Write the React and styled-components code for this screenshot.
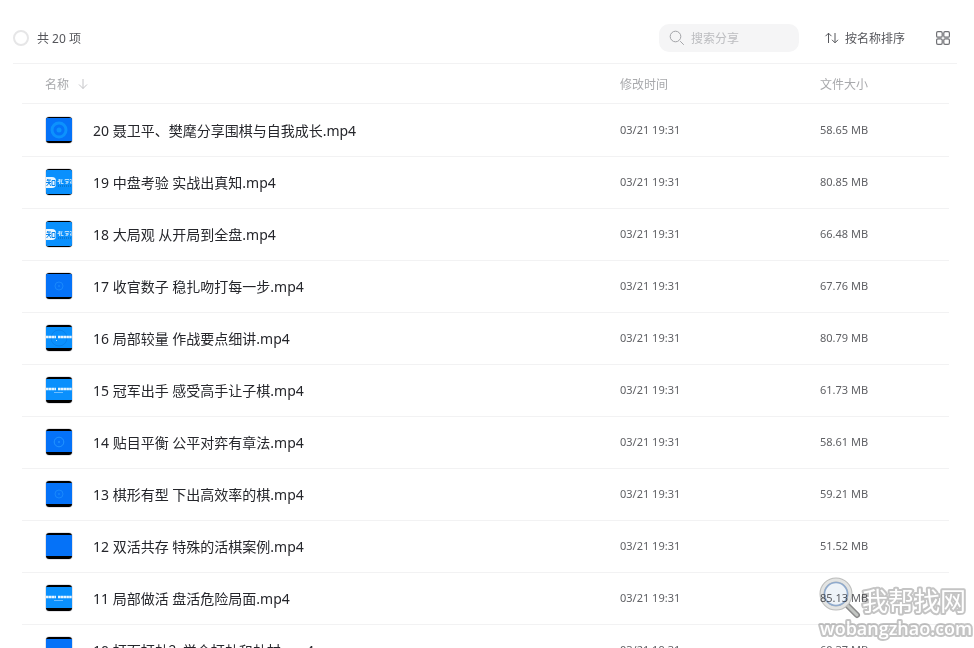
import React from "react";
import styled, { createGlobalStyle } from "styled-components";

const GlobalStyle = createGlobalStyle`
  * { box-sizing: border-box; }
  body {
    margin: 0;
    background: #fff;
    color: #25262b;
    font-family: "Noto Sans", "Noto Sans CJK SC", sans-serif;
    font-size: 14px;
  }
  button, input { font: inherit; color: inherit; }
`;

const Page = styled.main`
  height: 100vh;
  overflow: hidden;
  padding: 13px 17px 0 13px;
`;

const Toolbar = styled.header`
  display: flex;
  align-items: center;
  height: 51px;
  border-bottom: 1px solid #f2f2f3;
  font-size: 12px;
  color: #55565b;
`;

const SelectAll = styled.label`
  display: flex;
  align-items: center;
  gap: 8px;
  margin-right: auto;
`;

const RoundCheck = styled.input`
  appearance: none;
  width: 16px;
  height: 16px;
  margin: 0;
  border: 2px solid #e6e6e7;
  border-radius: 50%;
  background: #fff;
  &:checked { background: #637dff; }
`;

const Search = styled.label`
  display: flex;
  align-items: center;
  gap: 6px;
  width: 140px;
  height: 28px;
  padding: 0 10px;
  border-radius: 10px;
  background: #f5f5f6;
  color: #a3a4a8;
`;

const SearchInput = styled.input`
  flex: 1;
  min-width: 0;
  padding: 0;
  border: 0;
  outline: 0;
  background: none;
  color: #55565b;
  &::placeholder { color: #bcbdc0; opacity: 1; }
`;

const ToolButton = styled.button`
  display: flex;
  align-items: center;
  gap: 5px;
  margin-left: ${(p) => p.$gap}px;
  padding: 0;
  border: 0;
  background: none;
  cursor: pointer;
`;

const GridButton = styled(ToolButton)`
  margin-right: 6px;
`;

const Files = styled.table`
  width: calc(100% - 17px);
  margin: 0 8px 0 9px;
  border-collapse: separate;
  border-spacing: 0;
  table-layout: fixed;
`;

const HeadCell = styled.th`
  width: ${(p) => p.$width || "auto"};
  height: 40px;
  padding: 0 0 0 ${(p) => p.$inset || 0}px;
  border-bottom: 1px solid #f2f2f3;
  text-align: left;
  font-size: 12px;
  font-weight: 400;
  color: #a8a9ac;
`;

const SortButton = styled(ToolButton)`
  gap: 8px;
`;

const Cell = styled.td`
  height: 52px;
  padding: 0 0 1px;
  border-top: 1px solid #f2f2f3;
  font-size: 11px;
  line-height: 18px;
  color: #606165;
`;

const Row = styled.tr`
  &:first-child ${Cell} { border-top-color: transparent; }
  &:hover { background: #fafafb; }
`;

const NameBox = styled.div`
  display: flex;
  align-items: center;
  gap: 20px;
  padding-left: 23px;
  font-size: 14px;
  line-height: 20px;
  color: #25262b;
  white-space: nowrap;
`;

const FileName = styled.span`
  padding-top: 2px;
`;

const ThumbSvg = styled.svg`
  flex: none;
  display: block;
  width: 28px;
  height: 28px;
`;

const Watermark = styled.div`
  position: absolute;
  right: 0;
  bottom: 0;
  width: 158px;
  height: 74px;
  pointer-events: none;
  mix-blend-mode: multiply;
`;

const MarkSvg = styled.svg`
  display: block;
  width: 100%;
  height: 100%;
`;

const MarkText = styled.text`
  font-family: ${(p) => (p.$latin ? '"Open Sans", "Noto Sans"' : '"Noto Sans CJK SC"')}, sans-serif;
  font-size: ${(p) => p.$size}px;
  font-weight: ${(p) => (p.$latin ? 600 : 400)};
  fill: #fff;
  stroke: #c4c4c4;
  stroke-width: 4px;
  stroke-linejoin: round;
  paint-order: stroke;
`;

const FILES = [
  ["20 聂卫平、樊麾分享围棋与自我成长.mp4", "58.65 MB", "disc"],
  ["19 中盘考验 实战出真知.mp4", "80.85 MB", "logo"],
  ["18 大局观 从开局到全盘.mp4", "66.48 MB", "logo"],
  ["17 收官数子 稳扎吻打每一步.mp4", "67.76 MB", "faint"],
  ["16 局部较量 作战要点细讲.mp4", "80.79 MB", "title"],
  ["15 冠军出手 感受高手让子棋.mp4", "61.73 MB", "subtitle"],
  ["14 贴目平衡 公平对弈有章法.mp4", "58.61 MB", "ring"],
  ["13 棋形有型 下出高效率的棋.mp4", "59.21 MB", "dim"],
  ["12 双活共存 特殊的活棋案例.mp4", "51.52 MB", "plain"],
  ["11 局部做活 盘活危险局面.mp4", "85.13 MB", "subtitle"],
  ["10 打而打劫？学会打劫和劫材.mp4", "60.37 MB", "plain"],
];

const BARS = {
  disc: [1, 2], logo: [1, 1], faint: [1, 2], title: [2, 3],
  subtitle: [2, 3], ring: [2, 3], dim: [2, 3], plain: [2, 3],
};

function Thumb({ kind, id }) {
  const [top, bottom] = BARS[kind];
  const light = kind === "logo" || kind === "title" || kind === "subtitle";
  const titled = kind === "title" || kind === "subtitle";
  return (
    <ThumbSvg viewBox="0 0 28 28" aria-hidden="true">
      <defs>
        <clipPath id={id}><rect x="1" y="1" width="26" height="26" rx="3" /></clipPath>
      </defs>
      <rect x="0.5" y="0.5" width="27" height="27" rx="3.5" fill="none" stroke="#e4e4e8" />
      <g clipPath={`url(#${id})`}>
        <rect x="1" y="1" width="26" height="26" fill="#000" />
        <rect x="1" y={1 + top} width="26" height={26 - top - bottom} fill={light ? "#0a90fd" : "#0572f8"} />
        {kind === "disc" && (
          <g>
            <circle cx="14" cy="14" r="7" fill="none" stroke="#0c92fd" strokeWidth="3" />
            <circle cx="14" cy="14" r="2.5" fill="#0c92fd" />
          </g>
        )}
        {(kind === "faint" || kind === "ring" || kind === "dim") && (
          <g fill="none" stroke="#2b9dff" opacity={kind === "ring" ? 0.8 : 0.5}>
            <circle cx="14" cy="14" r={kind === "ring" ? 4.8 : 4} />
            <circle cx="14" cy="14" r="0.6" />
          </g>
        )}
        {kind === "logo" && (
          <g>
            <rect x="-4" y="9" width="15" height="11" rx="4" fill="#e9f6ff" />
            <path d="M3 11l-1 2M2 12h4M1 14.5h5M4 12v3l-2.500 3M4 15l2 3M7 12.500h3v5h-3z" fill="none" stroke="#0a86ee" strokeWidth="1" />
            <path d="M13 12h3M12.500 13.500h3M14.500 11v5M17 11l-1 4.500h2.500M20 12.500v-1h4v1M20.500 13.500h3M22 13v3M20.500 15.500l3-1M25.500 11v1M25.500 13.500v2M27 11v5" fill="none" stroke="#b5defd" strokeWidth="1" />
            <path d="M13 18h14" stroke="#0761aa" strokeWidth="1" strokeDasharray="1 1" />
          </g>
        )}
        {titled && (
          <g fill="none">
            {kind === "title" && <circle cx="14" cy="14" r="8" stroke="#0879df" strokeWidth="0.6" />}
            <path d="M1 13h10M13 13h14" stroke="#e6f5ff" strokeWidth="2.400" strokeDasharray="2.500 .3" />
            {kind === "subtitle"
              ? <path d="M9 16.500h9" stroke="#70bfff" strokeWidth="1" />
              : <path d="M11 16.500h1" stroke="#a8d9ff" strokeWidth="1" />}
          </g>
        )}
      </g>
    </ThumbSvg>
  );
}

export default function App() {
  return (
    <>
      <GlobalStyle />
      <Page>
        <Toolbar>
          <SelectAll>
            <RoundCheck type="checkbox" />
            共 20 项
          </SelectAll>
          <Search>
            <svg width="16" height="16" viewBox="0 0 16 16" fill="none" stroke="currentColor" aria-hidden="true">
              <circle cx="6.500" cy="6.500" r="5.300" />
              <path d="M11.200 11.200l3.600 3.600" />
            </svg>
            <SearchInput type="text" placeholder="搜索分享" aria-label="搜索分享" />
          </Search>
          <ToolButton type="button" $gap={25}>
            <svg width="16" height="16" viewBox="0 0 16 16" fill="none" stroke="currentColor" aria-hidden="true">
              <path d="M4.500 13V3.200M1.500 6.200l3-3 3 3M11 3v9.800M8 9.800l3 3 3-3" />
            </svg>
            按名称排序
          </ToolButton>
          <GridButton type="button" $gap={30} aria-label="网格视图">
            <svg width="16" height="16" viewBox="0 0 16 16" fill="none" stroke="#707175" strokeWidth="1.200" aria-hidden="true">
              <rect x="1.600" y="1.600" width="5.600" height="5.600" rx="1.300" />
              <rect x="8.800" y="1.600" width="5.600" height="5.600" rx="1.300" />
              <rect x="1.600" y="8.800" width="5.600" height="5.600" rx="1.300" />
              <rect x="8.800" y="8.800" width="5.600" height="5.600" rx="1.300" />
            </svg>
          </GridButton>
        </Toolbar>
        <Files>
          <thead>
            <tr>
              <HeadCell scope="col" $inset={23}>
                <SortButton type="button" $gap={0}>
                  名称
                  <svg width="12" height="12" viewBox="0 0 12 12" fill="none" stroke="#c4c4c7" aria-hidden="true">
                    <path d="M6 1v9.500M2 6.500l4 4 4-4" />
                  </svg>
                </SortButton>
              </HeadCell>
              <HeadCell scope="col" $width="200px">修改时间</HeadCell>
              <HeadCell scope="col" $width="129px">文件大小</HeadCell>
            </tr>
          </thead>
          <tbody>
            {FILES.map(([name, size, kind], i) => (
              <Row key={name}>
                <Cell>
                  <NameBox>
                    <Thumb kind={kind} id={`thumb-${i}`} />
                    <FileName>{name}</FileName>
                  </NameBox>
                </Cell>
                <Cell>03/21 19:31</Cell>
                <Cell>{size}</Cell>
              </Row>
            ))}
          </tbody>
        </Files>
      </Page>
      <Watermark>
        <MarkSvg viewBox="0 0 158 74">
          <MarkText x="46" y="37" $size={26}>我帮找网</MarkText>
          <MarkText x="4" y="61" $size={18} $latin>wobangzhao.com</MarkText>
          <path d="M30 30l11 11" stroke="#8a8a8a" strokeWidth="6" strokeLinecap="round" />
          <path d="M29 29l12 12" stroke="#c3c6c3" strokeWidth="3" strokeLinecap="round" />
          <circle cx="20" cy="20" r="14" fill="#eef3f8" stroke="#bcbdbc" strokeWidth="5" />
          <circle cx="20" cy="20" r="14" fill="none" stroke="#e3e4e3" strokeWidth="3" />
          <circle cx="20" cy="20" r="11.500" fill="none" stroke="#8faacd" strokeWidth="1.500" />
        </MarkSvg>
      </Watermark>
    </>
  );
}
